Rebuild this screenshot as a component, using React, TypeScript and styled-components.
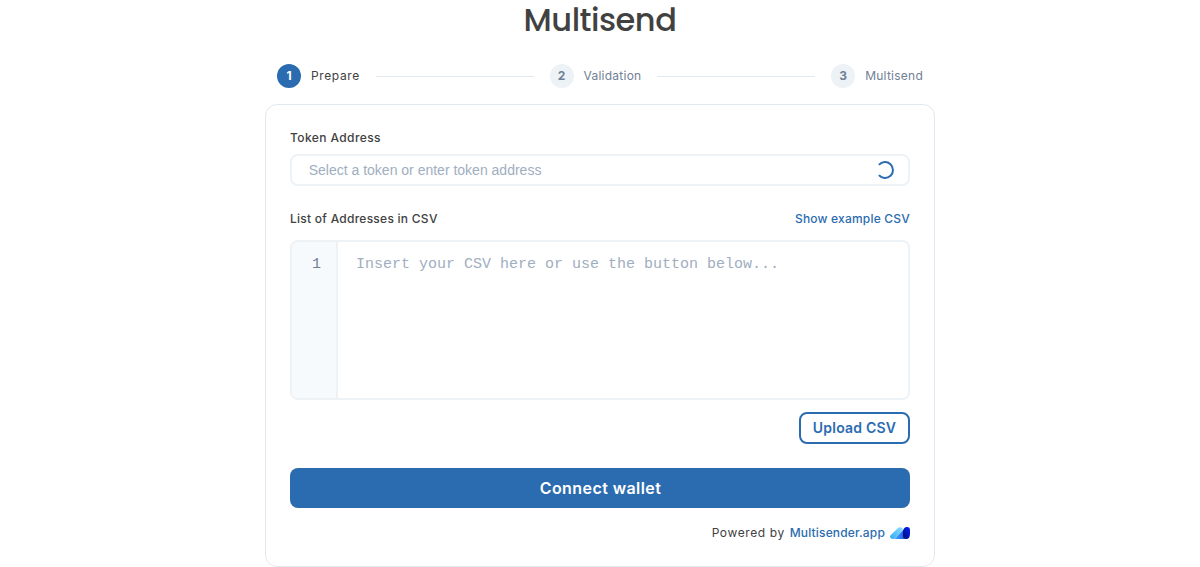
import React from "react";
import styled, { createGlobalStyle } from "styled-components";

const GlobalStyle = createGlobalStyle`
  *, *::before, *::after { box-sizing: border-box; }
  body {
    margin: 0;
    background: #fff;
    color: #414141;
    font-family: Inter, "Liberation Sans", sans-serif;
  }
`;

const Page = styled.main`
  width: 670px;
  height: 567px;
  margin: 0 auto;
  display: flex;
  flex-direction: column;
`;

const Title = styled.h1`
  margin: 0;
  height: 64px;
  font: 500 32px/40px Poppins, Inter, sans-serif;
  letter-spacing: -0.48px;
  text-align: center;
  color: #414141;
`;

const Steps = styled.ol`
  list-style: none;
  display: flex;
  align-items: center;
  gap: 16px;
  height: 24px;
  margin: 0 0 16px;
  padding: 0 12px;
`;

const Step = styled.li<{ $active?: boolean }>`
  display: flex;
  align-items: center;
  gap: 10px;
  font-size: 12px;
  line-height: 24px;
  letter-spacing: ${(p) => (p.$active ? "0.62px" : "0.25px")};
  color: ${(p) => (p.$active ? "#414141" : "#718096")};
`;

const StepNumber = styled.span<{ $active?: boolean }>`
  width: 24px;
  height: 24px;
  border-radius: 50%;
  font-weight: 700;
  letter-spacing: 0;
  text-align: center;
  background: ${(p) => (p.$active ? "#2b6cb0" : "#edf2f7")};
  color: ${(p) => (p.$active ? "#fff" : "#718096")};
`;

const StepLine = styled.li`
  flex: 1;
  height: 1px;
  background: #e2e8f0;
`;

const Card = styled.section`
  display: flex;
  flex-direction: column;
  height: 463px;
  padding: 24px;
  border: 1px solid #e2e8f0;
  border-radius: 12px;
`;

const LabelRow = styled.div<{ $spacing: number }>`
  display: flex;
  justify-content: space-between;
  font-size: 12px;
  font-weight: 500;
  line-height: 18px;
  letter-spacing: ${(p) => p.$spacing}px;
`;

const Link = styled.a`
  color: #2b6cb0;
  font-weight: 500;
  letter-spacing: 0.2px;
  text-decoration: none;
`;

const TokenField = styled.div`
  display: flex;
  align-items: center;
  height: 32px;
  margin: 7px 0 24px;
  padding: 0 13px 0 16.7px;
  border: 2px solid #edf2f7;
  border-radius: 8px;
`;

const TokenInput = styled.input`
  flex: 1;
  min-width: 0;
  padding: 0;
  border: 0;
  outline: 0;
  background: transparent;
  font: 14px "Liberation Sans", sans-serif;
  &::placeholder { color: #a0aec0; opacity: 1; }
`;

const Spinner = styled.svg`
  width: 20px;
  height: 20px;
  fill: none;
  stroke: #2b6cb0;
  stroke-width: 2;
`;

const Editor = styled.div`
  display: flex;
  height: 160px;
  margin: 12px 0;
  border: 2px solid #edf2f7;
  border-radius: 8px;
  overflow: hidden;
  font: 15px/21px "Liberation Mono", monospace;
`;

const Gutter = styled.div`
  width: 46px;
  padding: 12px 15px 0 0;
  border-right: 2px solid #edf2f7;
  background: #f7fafc;
  color: #718096;
  text-align: right;
`;

const CsvArea = styled.textarea`
  flex: 1;
  padding: 12px 18px 0;
  border: 0;
  outline: 0;
  resize: none;
  font: inherit;
  &::placeholder { color: #a0aec0; opacity: 1; }
`;

const Button = styled.button<{ $outline?: boolean }>`
  align-self: ${(p) => (p.$outline ? "flex-end" : "stretch")};
  width: ${(p) => (p.$outline ? "111px" : "auto")};
  height: ${(p) => (p.$outline ? "32px" : "40px")};
  margin: 0 0 ${(p) => (p.$outline ? "24px" : "16px")};
  padding: 0 0 0 ${(p) => (p.$outline ? "0" : "1px")};
  border: ${(p) => (p.$outline ? "2px solid #2b6cb0" : "0")};
  border-radius: 8px;
  background: ${(p) => (p.$outline ? "#fff" : "#2b6cb0")};
  color: ${(p) => (p.$outline ? "#2b6cb0" : "#fff")};
  font: 600 ${(p) => (p.$outline ? "14px" : "16px")} / 24px Inter, sans-serif;
  letter-spacing: ${(p) => (p.$outline ? "0.2px" : "0.42px")};
`;

const Footer = styled.footer`
  display: flex;
  justify-content: flex-end;
  align-items: center;
  gap: 5px;
  height: 18px;
  font-size: 12px;
  line-height: 18px;
  letter-spacing: 0.6px;
`;

const BrandLink = styled(Link)`
  letter-spacing: 0.16px;
`;

const Logo = () => (
  <svg width="20" height="12" viewBox="0 0 20 12" aria-hidden="true">
    <defs>
      <linearGradient id="pale" x1="0" y1="1" x2="1" y2="0">
        <stop offset="0" stopColor="#32a9fa" />
        <stop offset="1" stopColor="#8ee0ff" />
      </linearGradient>
      <linearGradient id="mid" x1="0" y1="0.5" x2="1" y2="0.5">
        <stop offset="0" stopColor="#4ab8ff" />
        <stop offset="1" stopColor="#174be0" />
      </linearGradient>
      <linearGradient id="deep" x1="0" y1="1" x2="1" y2="0">
        <stop offset="0" stopColor="#000b70" />
        <stop offset="1" stopColor="#0820ff" />
      </linearGradient>
    </defs>
    <path d="M.8 8.1 8 1c1.400-1.400 4.200-1 4.800.8.3 1-.1 1.800-.8 2.500L5.200 11.200C4.600 11.800 3.900 12 3 12 .3 12-.9 9.800.8 8.100Z" fill="url(#pale)" />
    <path d="M5 11.400 14.800 1.600 16 6l-1 6H3c.8 0 1.400-.1 2-.6Z" fill="url(#mid)" />
    <path d="M13 5.500C13 2.500 14.200 0 17 0c2 0 3 1 3 3v4c0 3-1.200 5-3.800 5-2.100 0-3.200-1.300-3.200-3.500Z" fill="url(#deep)" />
  </svg>
);

export default function App() {
  return (
    <>
      <GlobalStyle />
      <Page>
        <Title>Multisend</Title>
        <Steps>
          <Step $active><StepNumber $active>1</StepNumber>Prepare</Step>
          <StepLine />
          <Step><StepNumber>2</StepNumber>Validation</Step>
          <StepLine />
          <Step><StepNumber>3</StepNumber>Multisend</Step>
        </Steps>
        <Card>
          <LabelRow $spacing={0.4}>Token Address</LabelRow>
          <TokenField>
            <TokenInput placeholder="Select a token or enter token address" />
            <Spinner viewBox="0 0 20 20" aria-label="Loading">
              <path d="M3.900 4.800A8 8 0 1 1 3.900 15.200" />
            </Spinner>
          </TokenField>
          <LabelRow $spacing={0.26}>
            <span>List of Addresses in CSV</span>
            <Link>Show example CSV</Link>
          </LabelRow>
          <Editor>
            <Gutter>1</Gutter>
            <CsvArea placeholder="Insert your CSV here or use the button below..." />
          </Editor>
          <Button $outline>Upload CSV</Button>
          <Button>Connect wallet</Button>
          <Footer>
            <span>Powered by</span>
            <BrandLink>Multisender.app</BrandLink>
            <Logo />
          </Footer>
        </Card>
      </Page>
    </>
  );
}
